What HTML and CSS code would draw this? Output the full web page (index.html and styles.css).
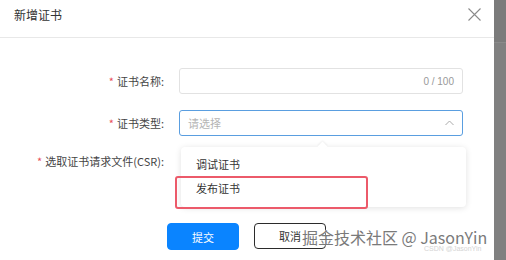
FILE: index.html
```html
<!DOCTYPE html>
<html lang="zh">
<head>
<meta charset="utf-8">
<title>新增证书</title>
<link rel="stylesheet" href="styles.css">
</head>
<body>
<div class="page">
  <div class="dialog">
    <div class="header">
      <span class="title">新增证书</span>
      <svg class="close" width="13" height="13" viewBox="0 0 13 13"><path d="M0.5 0.5 L12.5 12.5 M12.5 0.5 L0.5 12.5" stroke="#8a8a8a" stroke-width="1.1" fill="none"/></svg>
    </div>
    <div class="form">
      <div class="row">
        <label class="label"><span class="req">*</span>证书名称:</label>
        <div class="input"><span class="count">0 / 100</span></div>
      </div>
      <div class="row">
        <label class="label"><span class="req">*</span>证书类型:</label>
        <div class="input select">
          <span class="placeholder">请选择</span>
          <svg class="arrow" width="9" height="6" viewBox="0 0 9 6"><path d="M0.5 5 L4.5 1 L8.5 5" stroke="#aaa" stroke-width="1" fill="none"/></svg>
          <div class="dropdown">
            <div class="caret"></div>
            <div class="option">调试证书</div>
            <div class="option">发布证书</div>
          </div>
        </div>
      </div>
      <div class="row row3">
        <label class="label"><span class="req">*</span>选取证书请求文件(CSR):</label>
        <div></div>
      </div>
      <div class="actions">
        <button class="btn primary">提交</button>
        <button class="btn">取消</button>
      </div>
      <div class="highlight"></div>
      <div class="watermark">掘金技术社区 @ JasonYin</div>
      <div class="csdn">CSDN @JasonYin</div>
    </div>
  </div>
  <div class="scrollbar"><div class="sb-top"></div></div>
</div>
</body>
</html>
```
FILE: styles.css
```css
html, body {
  margin: 0;
  padding: 0;
  background: #ffffff;
}
body {
  font-family: "Noto Sans CJK SC", "Liberation Sans", sans-serif;
  color: #333;
}
.page {
  display: flex;
  width: 506px;
  height: 260px;
  overflow: hidden;
}
.dialog {
  width: 494px;
  height: 260px;
  background: #fff;
}
.header {
  height: 37px;
  border-bottom: 1px solid #e8e8e8;
  display: flex;
  justify-content: space-between;
  align-items: flex-start;
  padding: 0 13px 0 14px;
}
.title {
  font-size: 12px;
  line-height: 14px;
  margin-top: 8px;
  color: #333;
}
.close {
  margin-top: 8px;
}
.form {
  position: relative;
  padding-top: 30px;
  height: 192px;
}
.row {
  display: flex;
  align-items: center;
  height: 26px;
  margin-bottom: 16px;
}
.row3 {
  margin-top: -4px;
  margin-bottom: 0;
}
.label {
  width: 164px;
  text-align: right;
  font-size: 11px;
  color: #444;
  margin-right: 15px;
  white-space: nowrap;
}
.req {
  color: #e8505b;
  margin-right: 3px;
}
.input {
  position: relative;
  width: 284px;
  height: 26px;
  box-sizing: border-box;
  border: 1px solid #e2e2e2;
  border-radius: 3px;
  display: flex;
  align-items: center;
  justify-content: flex-end;
  padding: 0 8px;
}
.count {
  font-size: 10px;
  color: #999;
  font-family: "Liberation Sans", sans-serif;
}
.select {
  border-color: #5a9ee0;
  justify-content: space-between;
}
.placeholder {
  font-size: 11px;
  color: #b5b5b5;
}
.dropdown {
  position: absolute;
  left: 1px;
  top: 36px;
  width: 285px;
  height: 60px;
  background: #fff;
  border-radius: 4px;
  box-shadow: 0 1px 6px rgba(0, 0, 0, 0.12);
  padding-top: 5px;
  box-sizing: border-box;
  z-index: 2;
}
.caret {
  position: absolute;
  top: -4px;
  left: 138px;
  width: 7px;
  height: 7px;
  background: #fff;
  transform: rotate(45deg);
  box-shadow: -1px -1px 2px rgba(0, 0, 0, 0.06);
}
.option {
  position: relative;
  font-size: 11px;
  color: #333;
  height: 24px;
  line-height: 24px;
  padding-left: 15px;
}
.actions {
  display: flex;
  gap: 15px;
  margin-top: 49px;
  padding-left: 167px;
}
.btn {
  width: 72px;
  height: 26px;
  border: 1px solid #2b2b2b;
  border-radius: 4px;
  background: #fff;
  font-family: "Noto Sans CJK SC", sans-serif;
  font-size: 11px;
  color: #333;
  padding: 0;
}
.primary {
  height: 27px;
  background: #0a84ff;
  border-color: #0a84ff;
  color: #fff;
}
.highlight {
  position: absolute;
  left: 175px;
  top: 138px;
  width: 193px;
  height: 33px;
  box-sizing: border-box;
  border: 2px solid #ec5a6a;
  border-radius: 3px;
  z-index: 3;
}
.watermark {
  position: absolute;
  left: 302px;
  top: 191px;
  font-size: 16px;
  line-height: 16px;
  color: #7a7a7a;
  white-space: nowrap;
  z-index: 4;
  text-shadow: 0 0 2px #fff, 0 0 1px #fff;
}
.csdn {
  position: absolute;
  left: 424px;
  top: 207px;
  font-size: 7px;
  line-height: 8px;
  color: #d4d4d4;
  font-family: "Liberation Sans", sans-serif;
  white-space: nowrap;
  z-index: 3;
}
.scrollbar {
  width: 12px;
  height: 260px;
  background: #808080;
}
.sb-top {
  height: 42px;
  background: #7b7b7b;
  border-bottom: 1px solid #8a8a8a;
}
```
